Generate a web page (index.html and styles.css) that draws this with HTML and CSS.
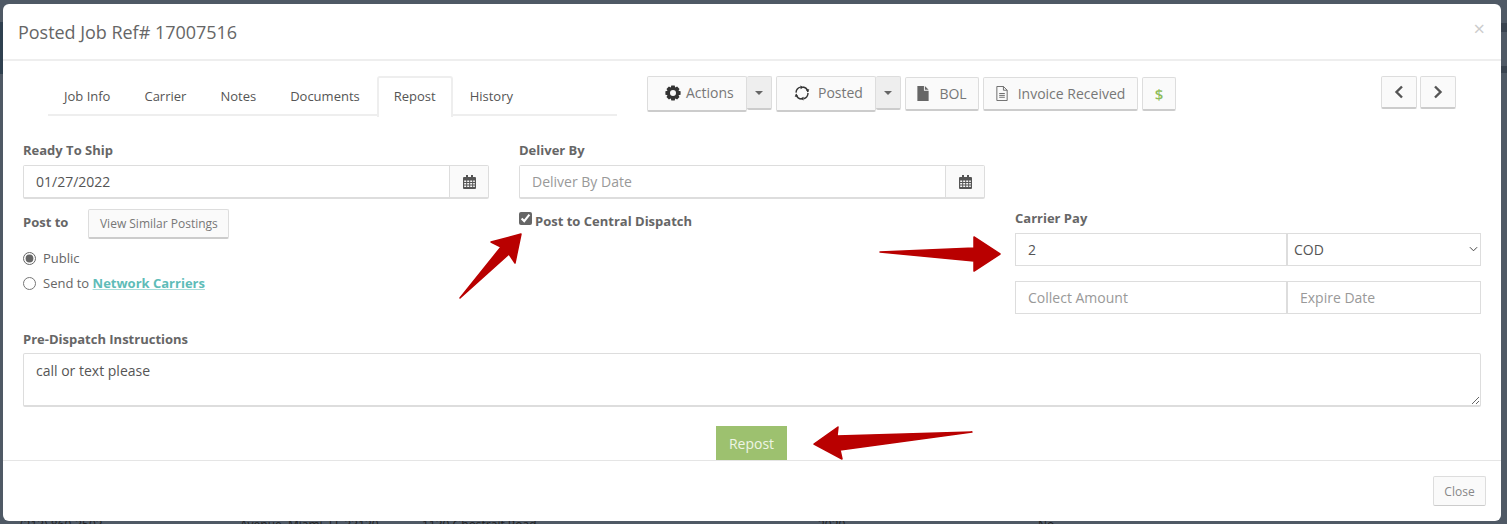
FILE: index.html
```html
<!DOCTYPE html>
<html lang="en">
<head>
<meta charset="utf-8">
<title>Posted Job Ref# 17007516</title>
<link rel="stylesheet" href="styles.css">
</head>
<body>
<div class="backdrop" aria-hidden="true">
  <span class="bd-bar bd-left"></span>
  <span class="bd-bar bd-right-1"></span>
  <span class="bd-bar bd-right-2"></span>
  <span class="bd-text bd-1">(213) 860-3503</span>
  <span class="bd-text bd-2">Avenue, Miami, FL 33130</span>
  <span class="bd-text bd-3">1130 Ghostrait Road</span>
  <span class="bd-text bd-4">2020</span>
  <span class="bd-text bd-5">No</span>
</div>
<main class="modal">
  <header class="modal-header">
    <h1 class="modal-title">Posted Job Ref# 17007516</h1>
    <span class="modal-x">×</span>
  </header>
  <section class="modal-body">
    <div class="toolbar">
      <nav class="tabs">
        <a class="tab">Job Info</a>
        <a class="tab">Carrier</a>
        <a class="tab">Notes</a>
        <a class="tab">Documents</a>
        <a class="tab tab-active">Repost</a>
        <a class="tab">History</a>
      </nav>
      <div class="actions">
        <div class="split">
          <button class="btn btn-main btn-actions">
            <svg class="ico" viewBox="0 0 16 16"><path fill="#333" fill-rule="evenodd" d="M6.300.4h3.400l.5 2.100 1.900-1 2.400 2.400-1 1.900 2.100.5v3.400l-2.100.5 1 1.900-2.400 2.400-1.900-1-.5 2.100H6.300l-.5-2.100-1.900 1-2.400-2.400 1-1.900-2.100-.5V6.300l2.100-.5-1-1.900 2.400-2.400 1.900 1zM8 5a3 3 0 1 0 0 6 3 3 0 0 0 0-6z"/></svg>
            Actions
          </button>
          <button class="btn btn-caret"><span class="caret"></span></button>
        </div>
        <div class="split">
          <button class="btn btn-main btn-posted">
            <svg class="ico ico-sync" viewBox="0 0 16 16"><circle cx="8" cy="8" r="6" fill="none" stroke="#333" stroke-width="1.400" stroke-dasharray="7.400 2"/><path fill="#333" d="M6.400.6l3.200 1.700-3 2zM11.700 4.400l3.600-.2-1.400 3.300zM9.600 11.800l-.1 3.600-3.100-1.900zM4.300 11.600l-3.600.2 1.400-3.300z"/></svg>
            Posted
          </button>
          <button class="btn btn-caret"><span class="caret"></span></button>
        </div>
        <button class="btn btn-plain btn-bol">
          <svg class="ico-file" viewBox="0 0 12 16"><path fill="#666" d="M0 0h7v5h5v11H0z"/><path fill="#666" d="M8 0l4 4H8z"/></svg>
          BOL
        </button>
        <button class="btn btn-plain btn-invoice">
          <svg class="ico-file" viewBox="0 0 12 16"><path fill="none" stroke="#666" d="M.5.5h7l4 4v11H.5z"/><path fill="none" stroke="#666" d="M7.500.5v4h4M3 8h6M3 10h6M3 12h6"/></svg>
          Invoice Received
        </button>
        <button class="btn btn-plain btn-dollar">$</button>
      </div>
      <div class="pager">
        <button class="btn btn-pager"><svg class="ico-chev" viewBox="0 0 10 14"><path fill="none" stroke="#555" stroke-width="2.400" d="M8 1.500L2.500 7 8 12.500"/></svg></button>
        <button class="btn btn-pager"><svg class="ico-chev" viewBox="0 0 10 14"><path fill="none" stroke="#555" stroke-width="2.400" d="M2 1.500L7.500 7 2 12.500"/></svg></button>
      </div>
    </div>

    <form class="form-grid">
      <div class="col">
        <label class="label">Ready To Ship</label>
        <div class="input-group">
          <input class="control" type="text" value="01/27/2022">
          <span class="addon">
            <svg class="ico-cal" viewBox="0 0 13 14"><path fill="#555" fill-rule="evenodd" d="M1 2h2V0h2v2h3V0h2v2h2a1 1 0 0 1 1 1v10a1 1 0 0 1-1 1H1a1 1 0 0 1-1-1V3a1 1 0 0 1 1-1zm.2 3.500v1.500h2V5.500zm3 0v1.500h2V5.500zm3 0v1.500h2V5.500zm3 0v1.500h1.600V5.500zm-9 2.500v1.500h2V8zm3 0v1.500h2V8zm3 0v1.500h2V8zm3 0v1.500h1.600V8zm-9 2.500V12h2v-1.500zm3 0V12h2v-1.500zm3 0V12h2v-1.500zm3 0V12h1.600v-1.500z"/></svg>
          </span>
        </div>
        <div class="post-row">
          <span class="label label-inline">Post to</span>
          <button class="btn btn-similar" type="button">View Similar Postings</button>
        </div>
        <label class="radio radio-first"><input type="radio" name="post" checked> Public</label>
        <label class="radio">
          <input type="radio" name="post"> <span>Send to <a class="link">Network Carriers</a></span>
        </label>
      </div>
      <div class="col">
        <label class="label">Deliver By</label>
        <div class="input-group">
          <input class="control" type="text" placeholder="Deliver By Date">
          <span class="addon">
            <svg class="ico-cal" viewBox="0 0 13 14"><path fill="#555" fill-rule="evenodd" d="M1 2h2V0h2v2h3V0h2v2h2a1 1 0 0 1 1 1v10a1 1 0 0 1-1 1H1a1 1 0 0 1-1-1V3a1 1 0 0 1 1-1zm.2 3.500v1.500h2V5.500zm3 0v1.500h2V5.500zm3 0v1.500h2V5.500zm3 0v1.500h1.600V5.500zm-9 2.500v1.500h2V8zm3 0v1.500h2V8zm3 0v1.500h2V8zm3 0v1.500h1.600V8zm-9 2.500V12h2v-1.500zm3 0V12h2v-1.500zm3 0V12h2v-1.500zm3 0V12h1.600v-1.500z"/></svg>
          </span>
        </div>
        <label class="check"><input type="checkbox" checked> Post to Central Dispatch</label>
      </div>
      <div class="col col-pay">
        <label class="label">Carrier Pay</label>
        <div class="pay-row">
          <input class="control control-flat" type="text" value="2">
          <div class="select-wrap">
            <select class="select"><option>COD</option></select>
            <svg class="select-chev" viewBox="0 0 10 6"><path fill="none" stroke="#444" stroke-width="1.100" d="M1 1l4 4 4-4"/></svg>
          </div>
        </div>
        <div class="pay-row pay-row-2">
          <input class="control control-flat" type="text" placeholder="Collect Amount">
          <input class="control control-flat control-expire" type="text" placeholder="Expire Date">
        </div>
      </div>
      <div class="col-full">
        <label class="label label-tight">Pre-Dispatch Instructions</label>
        <textarea class="textarea">call or text please</textarea>
      </div>
    </form>
    <div class="submit-row"><button class="btn-repost" type="button">Repost</button></div>
  </section>
  <footer class="modal-footer">
    <button class="btn btn-close" type="button">Close</button>
  </footer>
</main>
<svg class="arrows" viewBox="0 0 1507 524" aria-hidden="true">
  <g fill="#b90000" stroke="#b90000" stroke-width="1.500" stroke-linejoin="round">
    <path d="M460 298L501 247 491 242 521 234 515 263 509 254z"/>
    <path d="M880 252L974 248 974 237 1000 254 974 271 974 261z"/>
    <path d="M972 432L837 436 838 427 814 444 842 459 840 450z"/>
  </g>
</svg>
</body>
</html>
```

FILE: styles.css
```css
* { box-sizing: border-box; }
html, body { height: 100%; }
body {
  margin: 0;
  height: 524px;
  overflow: hidden;
  background: #4f5965;
  font-family: "Open Sans", "Liberation Sans", sans-serif;
  font-size: 13px;
  color: #666;
  padding: 4px 6px 3px 3px;
}
.backdrop { position: absolute; inset: 0; overflow: hidden; }
.bd-bar { position: absolute; background: #2f404f; }
.bd-left { left: 0; top: 22px; width: 3px; height: 52px; }
.bd-right-1 { right: 0; top: 23px; width: 6px; height: 9px; background: #39434f; }
.bd-right-2 { right: 0; top: 66px; width: 6px; height: 7px; background: #39434f; }
.bd-text { position: absolute; top: 516px; font-size: 12px; color: #222; }
.bd-1 { left: 20px; }
.bd-2 { left: 240px; }
.bd-3 { left: 422px; }
.bd-4 { left: 818px; }
.bd-5 { left: 1038px; }
.modal {
  position: relative;
  height: 517px;
  background: #fff;
  border-radius: 6px;
  display: flex;
  flex-direction: column;
}
.modal-header {
  height: 57px;
  flex: none;
  border-bottom: 2px solid #eee;
  display: flex;
  align-items: center;
  justify-content: space-between;
  padding: 1px 16px 0 15px;
}
.modal-title { margin: 0; font-size: 18px; font-weight: 400; color: #666; line-height: 24px; letter-spacing: -.03px; }
.modal-x { font-size: 20px; color: #ccc; line-height: 1; margin-top: -7px; }
.modal-body { flex: 1; padding: 15px 20px 0 20px; display: flex; flex-direction: column; min-height: 0; }
.toolbar { display: flex; align-items: flex-start; height: 41px; }
.tabs {
  margin-left: 25px;
  width: 569px;
  height: 40px;
  display: flex;
  border-bottom: 2px solid #eee;
}
.tab {
  height: 40px;
  padding: 10px 16px 0 15px;
  margin-right: 1px;
  font-size: 13px;
  line-height: 18px;
  color: #555;
  border: 1px solid transparent;
}
.tab-active { border: 2px solid #eee; border-bottom: 0; border-radius: 3px 3px 0 0; background: #fff; height: 41px; margin-left: -1px; padding: 9px 15px 0; }
.actions { margin-left: 30px; display: flex; align-items: flex-start; gap: 4px; }
.btn {
  font-family: inherit;
  font-size: 14px;
  color: #777;
  background: #fafafa;
  border: 1px solid #ddd;
  border-bottom: 2px solid #ccc;
  border-radius: 2px;
  padding: 0;
  display: flex;
  align-items: center;
  justify-content: center;
}
.split { display: flex; align-items: flex-start; }
.btn-main { height: 36px; padding-bottom: 2px; justify-content: flex-start; }
.btn-actions { width: 100px; gap: 5px; padding-left: 17px; }
.btn-posted { width: 100px; gap: 8px; padding-left: 17px; }
.btn-caret { width: 25px; height: 34px; background: #eee; border-left: 0; }
.caret { width: 0; height: 0; border: 4px solid transparent; border-top-color: #666; border-bottom: 0; }
.ico { width: 16px; height: 16px; flex: none; }
.btn-plain { height: 34px; margin-top: 1px; }
.btn-bol { width: 74px; gap: 10px; }
.btn-invoice { width: 155px; gap: 10px; }
.btn-dollar { width: 34px; color: #8fbc5a; font-size: 15px; font-weight: 600; }
.ico-file { width: 12px; height: 15px; flex: none; }
.pager { margin-left: auto; margin-right: 25px; display: flex; gap: 3px; }
.btn-pager { width: 36px; height: 33px; }
.ico-chev { width: 10px; height: 14px; }
.form-grid {
  margin-top: 24px;
  display: grid;
  grid-template-columns: 466px 466px 466px;
  column-gap: 30px;
}
.col { display: flex; flex-direction: column; align-items: flex-start; min-width: 0; }
.col-pay { padding-top: 68px; }
.col-full { grid-column: 1 / -1; margin-top: 16px; }
.label { display: block; font-size: 13px; font-weight: 700; color: #666; line-height: 18px; margin-bottom: 6px; }
.label-tight { margin-bottom: 5px; }
.input-group { display: flex; width: 100%; height: 34px; border: 1px solid #ddd; border-bottom: 2px solid #ddd; border-radius: 2px; }
.control {
  flex: 1;
  min-width: 0;
  height: 100%;
  border: 0;
  outline: 0;
  padding: 0 12px;
  font-family: inherit;
  font-size: 14px;
  color: #555;
  background: #fff;
}
.control::placeholder { color: #999; opacity: 1; }
.addon { width: 39px; flex: none; display: flex; align-items: center; justify-content: center; background: #fafafa; border-left: 1px solid #ddd; }
.ico-cal { width: 13px; height: 14px; }
.post-row { display: flex; align-items: center; gap: 20px; margin-top: 10px; height: 30px; }
.label-inline { margin: 0 0 4px; }
.btn-similar { width: 141px; height: 30px; font-size: 12px; }
.radio { display: flex; align-items: center; gap: 7px; font-size: 13px; line-height: 18px; color: #666; margin-top: 7px; }
.radio-first { margin-top: 10px; }
.radio input, .check input { margin: 0; accent-color: #666; width: 13px; height: 13px; }
.link { color: #5ebcb8; font-weight: 700; text-decoration: underline; text-decoration-color: #a8dcd9; }
.check { display: flex; align-items: flex-start; gap: 3px; margin-top: 13px; font-size: 13px; font-weight: 700; color: #666; line-height: 18px; }
.pay-row { display: flex; width: 100%; height: 33px; }
.pay-row-2 { margin-top: 15px; }
.control-flat { flex: none; width: 272px; border: 1px solid #ddd; }
.control-expire { width: 194px; }
.select-wrap { position: relative; width: 194px; height: 33px; }
.select {
  appearance: none;
  width: 100%;
  height: 100%;
  border: 1px solid #ddd;
  border-radius: 0;
  background: #fff;
  padding: 0 6px;
  font-family: inherit;
  font-size: 14px;
  color: #555;
}
.select-chev { position: absolute; right: 3px; top: 13px; width: 9px; height: 6px; }
.textarea {
  display: block;
  width: 100%;
  height: 54px;
  border: 1px solid #ddd;
  border-bottom: 2px solid #ddd;
  border-radius: 2px;
  padding: 7px 12px;
  font-family: inherit;
  font-size: 14px;
  color: #555;
  outline: 0;
}
.submit-row { margin-top: auto; display: flex; justify-content: center; padding-right: 1px; }
.btn-repost {
  width: 71px;
  height: 34px;
  border: 0;
  background: #9dc16f;
  color: #eef5e5;
  font-family: inherit;
  font-size: 14px;
}
.modal-footer {
  height: 61px;
  flex: none;
  border-top: 1px solid #e5e5e5;
  display: flex;
  justify-content: flex-end;
  padding: 15px 15px 0 0;
}
.btn-close { width: 53px; height: 30px; font-size: 12px; border-bottom: 1px solid #ccc; color: #888; }
.arrows { position: absolute; inset: 0; width: 1507px; height: 524px; pointer-events: none; }
```
